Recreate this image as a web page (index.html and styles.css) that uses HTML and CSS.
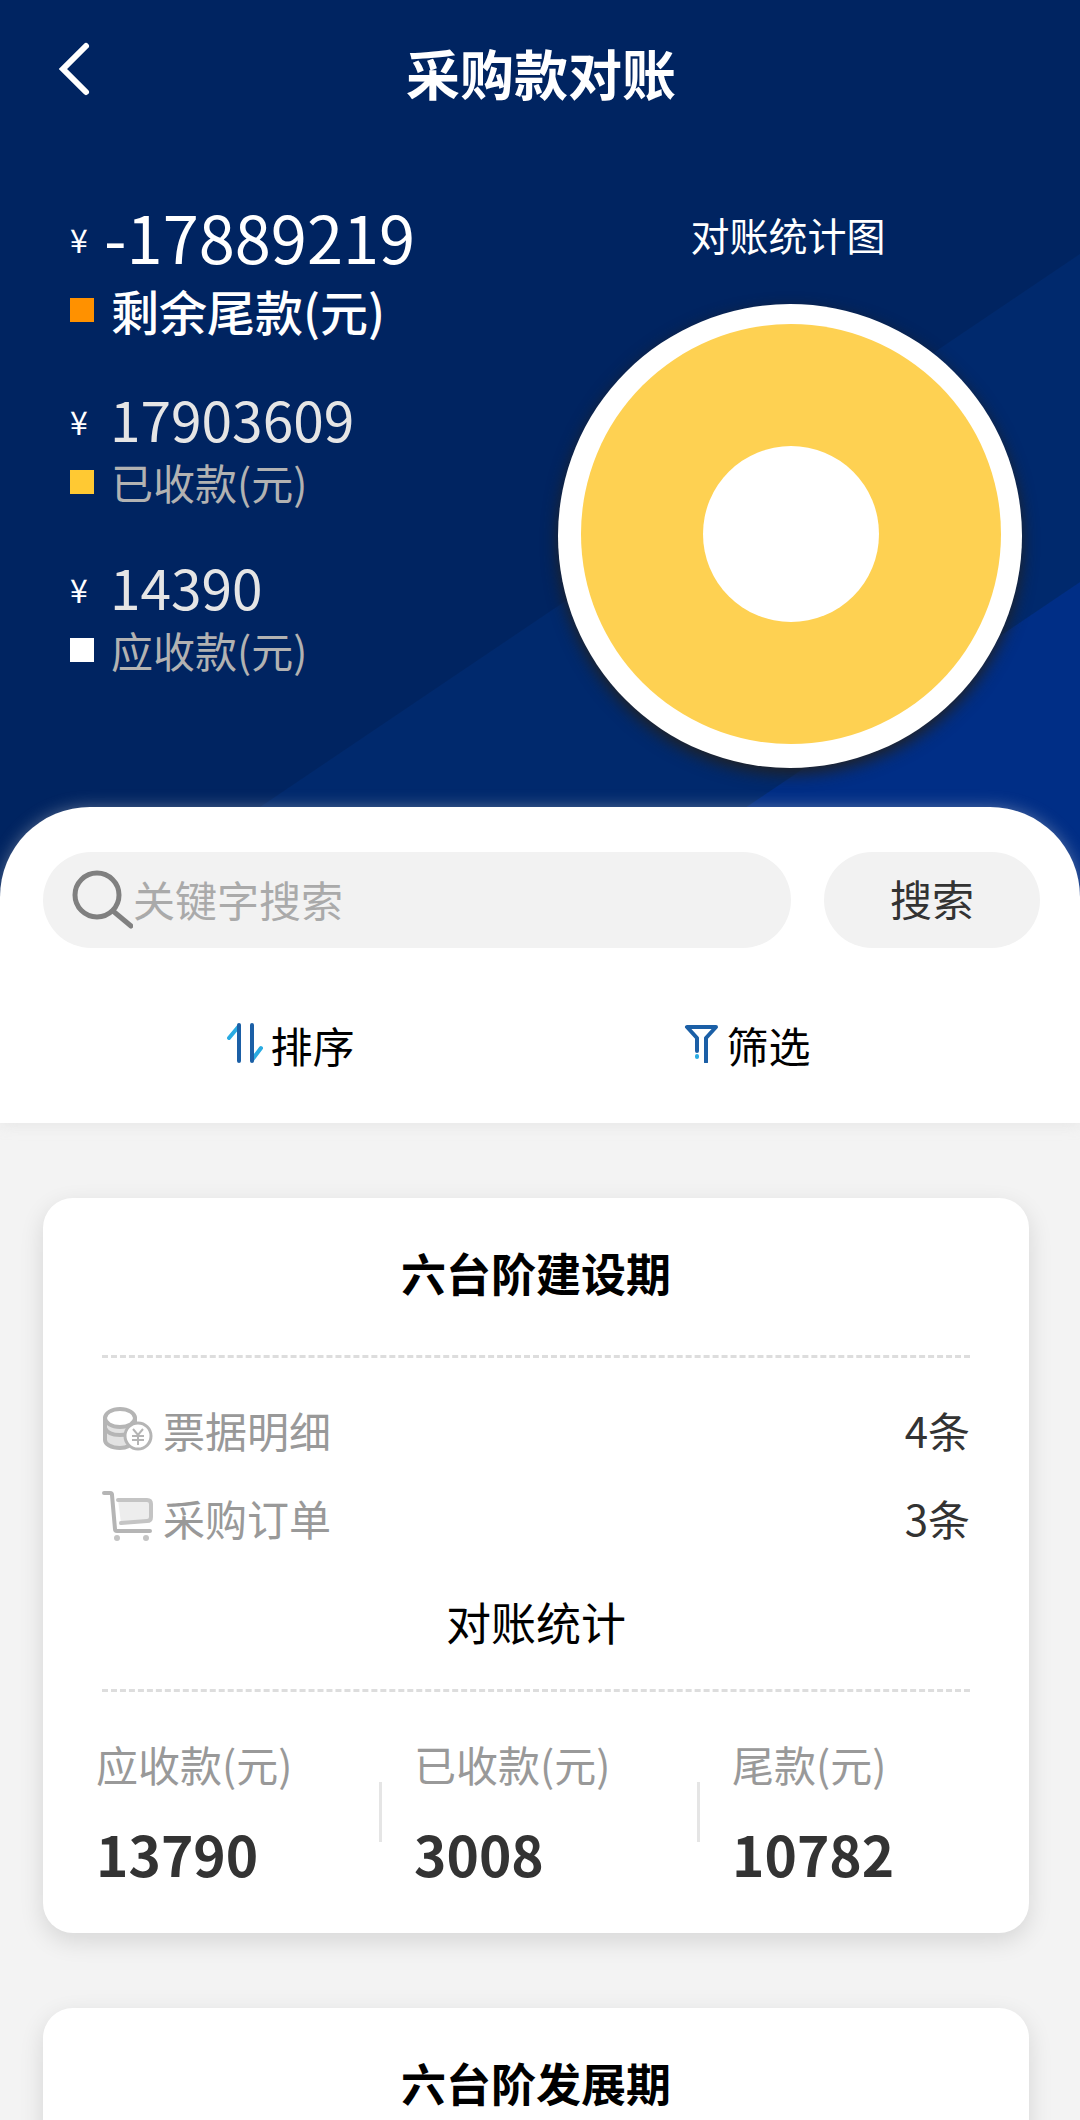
FILE: index.html
```html
<!DOCTYPE html>
<html lang="zh-CN">
<head>
<meta charset="utf-8">
<meta name="viewport" content="width=device-width, initial-scale=1">
<title>采购款对账</title>
<link rel="stylesheet" href="styles.css">
</head>
<body>
<div class="app">
  <header class="hero">
    <div class="topbar">
      <button class="back" type="button" aria-label="返回">
        <svg width="36" height="56" viewBox="0 0 36 56" fill="none" stroke="#fff" stroke-width="6" stroke-linecap="round"><path d="M29 5 6 28l23 23"/></svg>
      </button>
      <h1 class="title">采购款对账</h1>
    </div>
    <div class="summary">
      <div class="amounts">
        <div class="amount amount-main">
          <p class="value"><span class="yen">¥</span>-17889219</p>
          <p class="name"><span class="swatch swatch-orange"></span>剩余尾款(元)</p>
        </div>
        <div class="amount">
          <p class="value"><span class="yen">¥</span>17903609</p>
          <p class="name"><span class="swatch swatch-yellow"></span>已收款(元)</p>
        </div>
        <div class="amount">
          <p class="value"><span class="yen">¥</span>14390</p>
          <p class="name"><span class="swatch swatch-white"></span>应收款(元)</p>
        </div>
      </div>
      <figure class="chart">
        <figcaption class="chart-title">对账统计图</figcaption>
        <svg class="donut" viewBox="0 0 464 464" role="img" aria-label="对账统计图">
          <circle cx="233" cy="230" r="210" fill="#fed152"/>
          <circle cx="233" cy="230" r="88" fill="#fff"/>
        </svg>
      </figure>
    </div>
  </header>

  <section class="sheet">
    <form class="search">
      <label class="search-box">
        <svg class="search-icon" width="61" height="62" viewBox="0 0 61 62" fill="none" stroke="#808080" stroke-width="5" stroke-linecap="round"><circle cx="25" cy="26" r="22"/><path d="m41 42 18 15"/></svg>
        <input class="search-input" type="text" placeholder="关键字搜索" aria-label="关键字搜索">
      </label>
      <button class="search-button" type="submit">搜索</button>
    </form>
    <div class="tools">
      <button class="tool" type="button">
        <svg width="38" height="42" viewBox="0 0 38 42" fill="none" stroke-width="4" stroke-linecap="round" stroke-linejoin="round"><path d="m13 5-10 12M26 39l9-12" stroke="#29abe2"/><path d="M13 4v36M26 4v36" stroke="#1b5fa6"/></svg>
        排序
      </button>
      <button class="tool" type="button">
        <svg width="36" height="42" viewBox="0 0 36 42" fill="none" stroke-width="4" stroke-linecap="round" stroke-linejoin="round"><path d="M13 30V17L3 6h29L22 17v24" stroke="#1b5fa6"/><path d="M13 35v1" stroke="#29abe2"/></svg>
        筛选
      </button>
    </div>
  </section>

  <main class="list">
    <article class="card">
      <h2 class="card-title">六台阶建设期</h2>
      <hr class="rule">
      <div class="links">
        <a class="link" href="#bills">
          <svg width="52" height="52" viewBox="0 0 52 52" fill="none" stroke="#b5b5b5" stroke-width="4">
            <path d="M3 14v23c0 4 6 8 15 8s16-4 16-8V14" fill="#e2e2e2" stroke="none"/>
            <path d="M3 14v23c0 4 6 8 15 8q5 0 9-2M3 25c2 5 8 7 15 7q4 0 7-1"/>
            <path d="M33 14v8"/>
            <ellipse cx="18" cy="15" rx="15" ry="9" fill="#fff"/>
            <circle cx="36" cy="33" r="13" fill="#fff" stroke-width="3"/>
            <path d="m31 26 5 6 5-6M36 32v10M30 33h12M30 37h12" stroke-width="2"/>
          </svg>
          <span class="link-name">票据明细</span>
          <span class="link-count">4条</span>
        </a>
        <a class="link" href="#orders">
          <svg width="52" height="52" viewBox="0 0 52 52" fill="none" stroke="#b5b5b5" stroke-width="4" stroke-linecap="round" stroke-linejoin="round">
            <path d="M16 9h29q4 0 4 4v13q0 4-4 4l-26 2z" fill="#ededed" stroke="none"/>
            <path d="M16 9h29q4 0 4 4v13q0 4-4 4l-26 2" stroke="#c4c4c4"/>
            <path d="M2 2h6q2 0 2 2l3 34q0 2 2 2h33"/>
            <circle cx="15" cy="47" r="3" fill="#c4c4c4" stroke="none"/><circle cx="44" cy="47" r="3" fill="#c4c4c4" stroke="none"/>
          </svg>
          <span class="link-name">采购订单</span>
          <span class="link-count">3条</span>
        </a>
      </div>
      <h3 class="card-subtitle">对账统计</h3>
      <hr class="rule">
      <dl class="stats">
        <div class="stat"><dt>应收款(元)</dt><dd>13790</dd></div>
        <div class="stat"><dt>已收款(元)</dt><dd>3008</dd></div>
        <div class="stat"><dt>尾款(元)</dt><dd>10782</dd></div>
      </dl>
    </article>
    <article class="card">
      <h2 class="card-title">六台阶发展期</h2>
      <hr class="rule">
    </article>
  </main>
</div>
</body>
</html>
```

FILE: styles.css
```css
* {
  box-sizing: border-box;
  margin: 0;
  padding: 0;
}

body {
  font-family: "Noto Sans CJK SC", sans-serif;
  font-size: 42px;
  color: #000;
  background: #f3f3f3;
}

button,
input {
  font: inherit;
  color: inherit;
  border: 0;
  background: none;
}

.app {
  height: 100vh;
  overflow: hidden;
}

/* Header */
.hero {
  padding-bottom: 132px;
  color: #fff;
  background: linear-gradient(146deg, #002461 814px, #00296d 815px, #00296d 1086px, #002e86 1087px);
}

.topbar {
  display: grid;
  grid-template-columns: 120px 1fr 118px;
  align-items: center;
  height: 142px;
}

.back {
  display: flex;
  padding: 0 0 4px 57px;
}

.title {
  padding-top: 4px;
  font-size: 54px;
  font-weight: 700;
  line-height: 80px;
  text-align: center;
}

.summary {
  display: flex;
  justify-content: space-between;
  padding: 56px 58px 0 70px;
}

.amounts {
  display: flex;
  flex-direction: column;
  gap: 40px;
}

.value {
  display: flex;
  align-items: center;
  font-size: 55px;
  line-height: 64px;
  color: #e5e5e5;
}

.yen {
  width: 40px;
  padding-top: 6px;
  font-size: 32px;
  line-height: 52px;
  color: #fff;
}

.name {
  display: flex;
  align-items: center;
  gap: 17px;
  line-height: 64px;
  color: #b2b2b2;
}

.amount-main .value {
  font-size: 65px;
  line-height: 76px;
  color: #fff;
}

.amount-main .yen {
  width: 34px;
}

.amount-main .name {
  font-size: 48px;
  font-weight: 500;
  line-height: 72px;
  color: #fff;
}

.swatch {
  width: 24px;
  height: 24px;
}

.swatch-orange { background: #ff9100; }
.swatch-yellow { background: #ffc933; }
.swatch-white { background: #fff; }

.chart {
  width: 464px;
  padding-top: 6px;
}

.chart-title {
  margin-bottom: 40px;
  padding-right: 4px;
  font-size: 39px;
  line-height: 60px;
  text-align: center;
}

.donut {
  display: block;
  width: 100%;
  border-radius: 50%;
  background: #fff;
  box-shadow: 0 6px 16px #222;
}

/* Search and filters */
.sheet {
  margin-top: -93px;
  padding: 45px 40px 19px 43px;
  border-radius: 90px 90px 0 0;
  background: #fff;
  box-shadow: 0 0 16px rgba(204, 204, 204, 0.4);
}

.search {
  display: flex;
  gap: 33px;
}

.search-box {
  display: flex;
  flex: 1;
  align-items: center;
  height: 96px;
  padding-left: 29px;
  border-radius: 48px;
  background: #f2f2f2;
}

.search-input {
  flex: 1;
  min-width: 0;
  padding-bottom: 4px;
  outline: 0;
}

.search-input::placeholder {
  color: #aaa;
}

.search-button {
  width: 216px;
  padding-bottom: 6px;
  border-radius: 48px;
  color: #333;
  background: #f2f2f2;
}

.tools {
  display: grid;
  grid-template-columns: 1fr 1fr;
  margin: 36px 64px 0 19px;
}

.tool {
  display: flex;
  align-items: center;
  justify-content: center;
  gap: 6px;
  height: 120px;
}

.tool svg {
  margin-bottom: 4px;
}

/* Cards */
.list {
  display: flex;
  flex-direction: column;
  gap: 75px;
  padding: 75px 51px 75px 43px;
}

.card {
  padding: 42px 0 40px;
  border-radius: 30px;
  background: #fff;
  box-shadow: 0 8px 24px rgba(0, 0, 0, 0.12);
}

.card-title,
.card-subtitle {
  font-size: 45px;
  line-height: 66px;
  text-align: center;
}

.card-title {
  margin-bottom: 49px;
  font-weight: 700;
}

.card-subtitle {
  margin: 28px 0 34px;
  font-weight: 400;
}

.rule {
  margin: 0 59px;
  border: 0;
  border-top: 3px dashed #ddd;
}

.links {
  margin: 27px 59px 0;
}

.link {
  display: flex;
  align-items: center;
  gap: 9px;
  height: 88px;
  color: #999;
  text-decoration: none;
}

.link-count {
  margin-left: auto;
  color: #333;
}

.stats {
  display: grid;
  grid-template-columns: repeat(3, 1fr);
  margin: 42px 11px 0 21px;
}

.stat {
  padding-left: 32px;
  background: linear-gradient(#e5e5e5, #e5e5e5) no-repeat right 48px / 3px 60px;
}

.stat:last-child {
  background: none;
}

.stat dt {
  margin-bottom: 20px;
  line-height: 60px;
  color: #999;
}

.stat dd {
  font-size: 55px;
  font-weight: 700;
  line-height: 79px;
  color: #333;
}
```
